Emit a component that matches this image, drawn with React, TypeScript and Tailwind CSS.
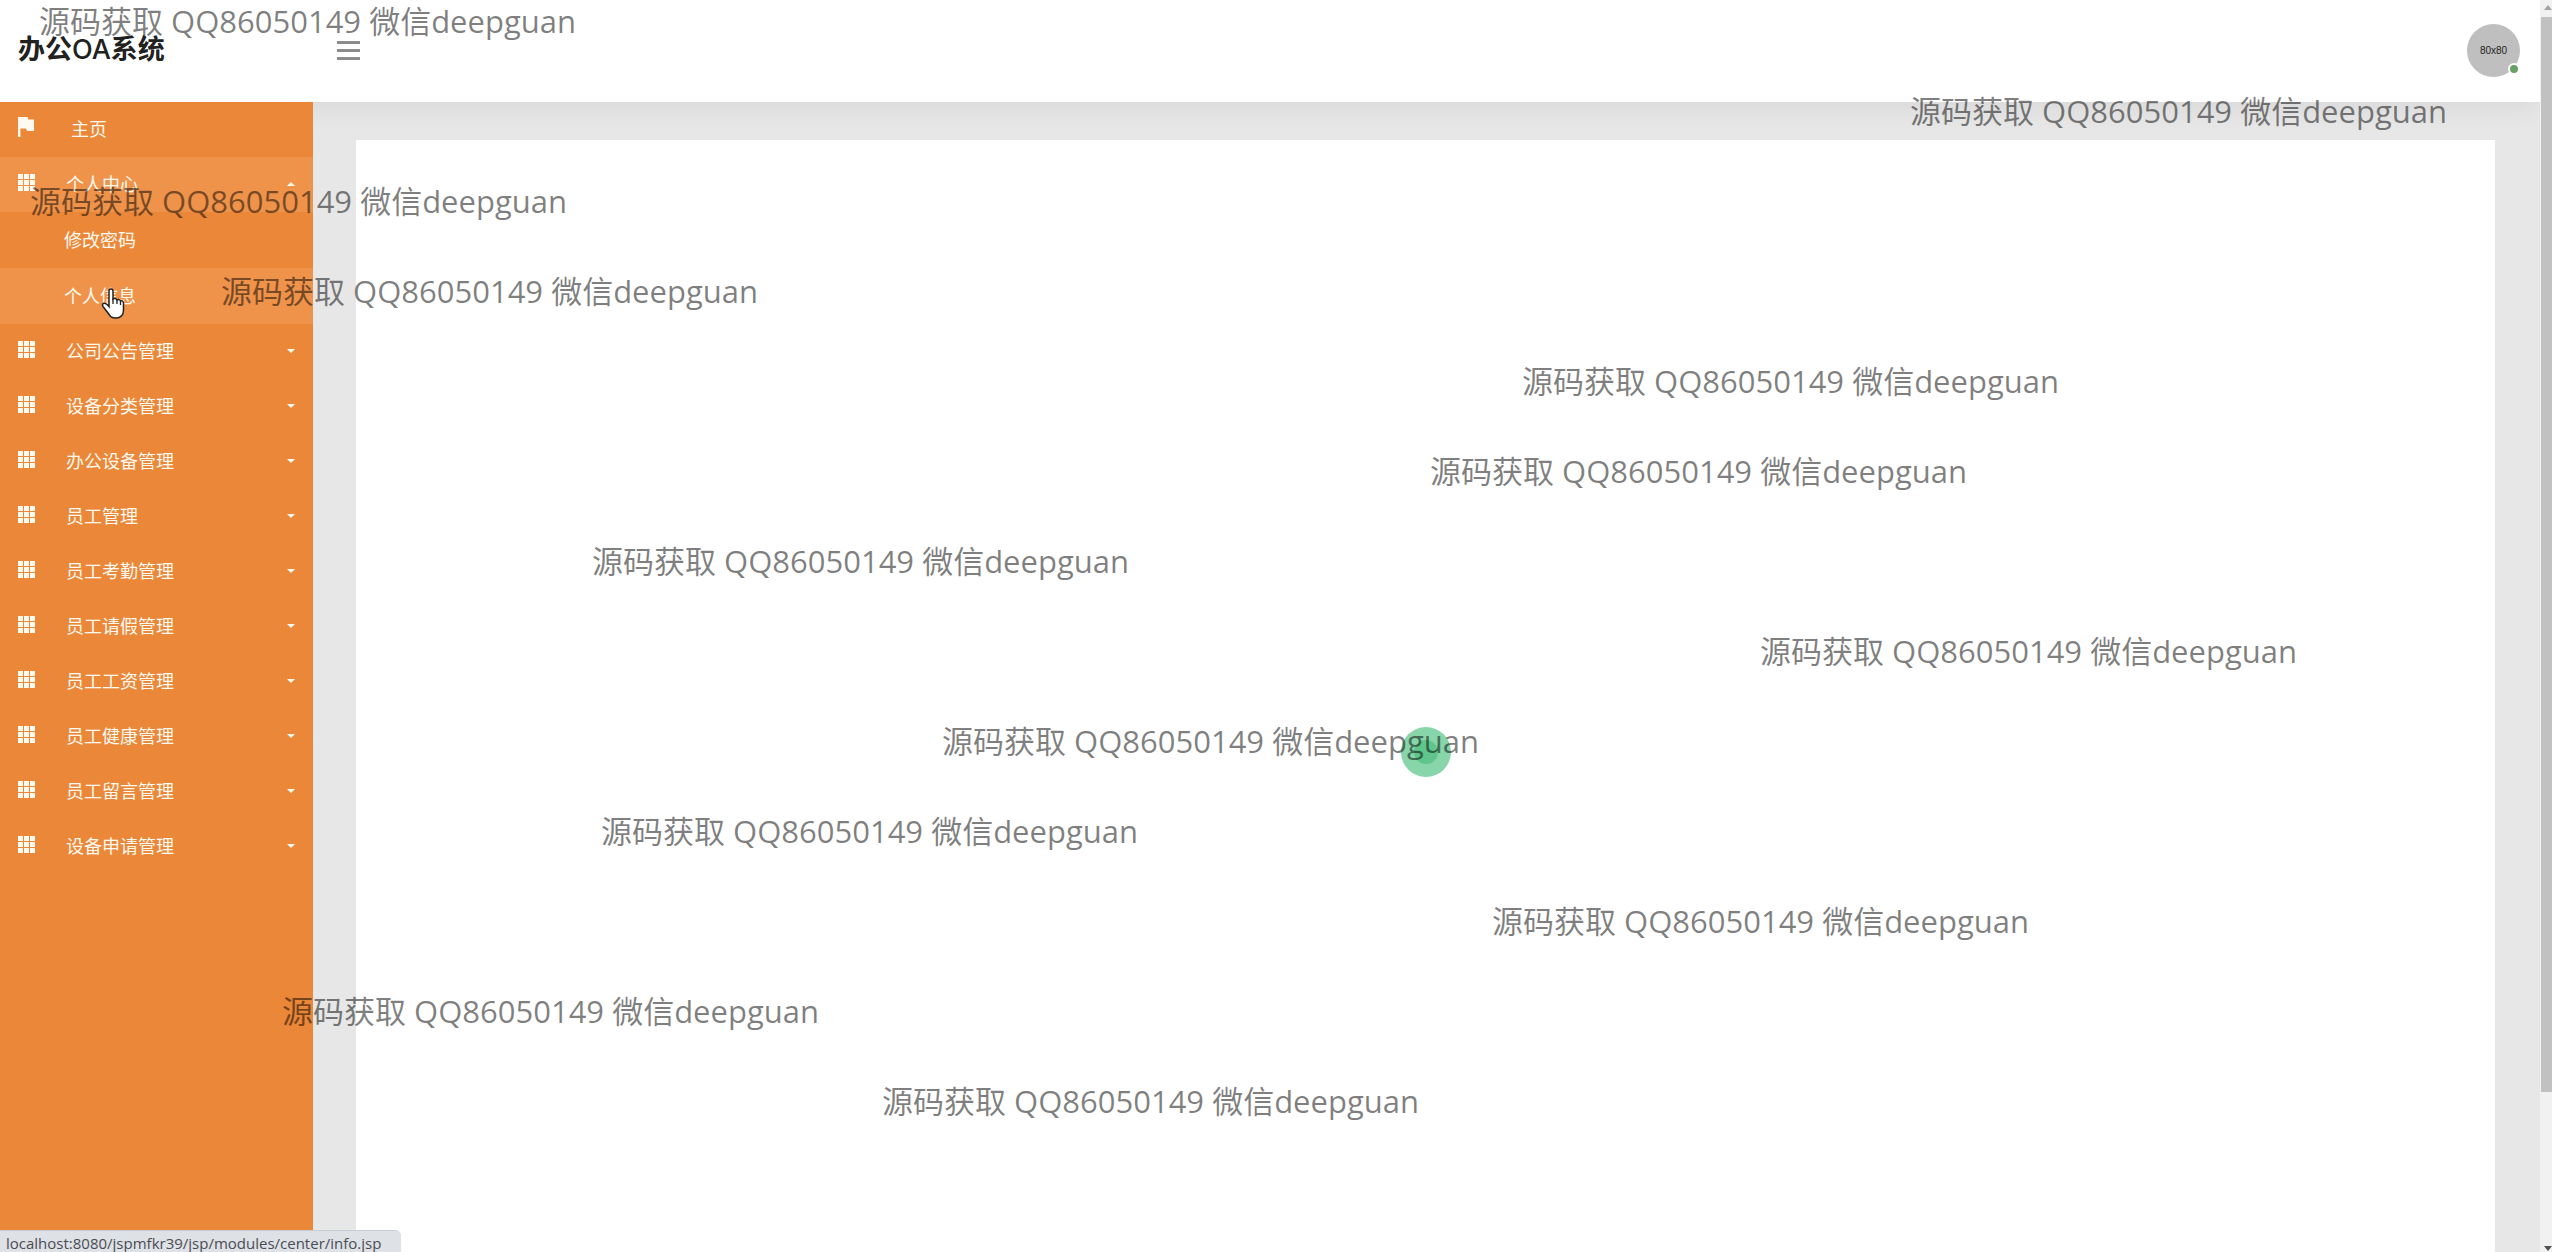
import { useState } from "react";

const MENU = [
  "公司公告管理",
  "设备分类管理",
  "办公设备管理",
  "员工管理",
  "员工考勤管理",
  "员工请假管理",
  "员工工资管理",
  "员工健康管理",
  "员工留言管理",
  "设备申请管理",
];

const WATERMARK_OFFSETS = [39, 1910, 30, 221, 1522, 1430, 592, 1760, 942, 601, 1492, 282, 882];

function GridIcon() {
  return (
    <svg className="size-[17px] shrink-0" viewBox="0 0 17 17" fill="currentColor" aria-hidden="true">
      {[0, 6, 12].map((y) => [0, 6, 12].map((x) => <rect key={`${x}-${y}`} x={x} y={y} width="5" height="5" />))}
    </svg>
  );
}

function Caret({ up = false }: { up?: boolean }) {
  return (
    <svg className="h-1 w-2 shrink-0" viewBox="0 0 8 4" fill="currentColor" aria-hidden="true">
      <path d={up ? "M0 4L4 0L8 4Z" : "M0 0H8L4 4Z"} />
    </svg>
  );
}

function MenuItem({ label, open, onClick }: { label: string; open: boolean; onClick: () => void }) {
  return (
    <button
      type="button"
      aria-expanded={open}
      onClick={onClick}
      className={`flex h-[55px] w-full cursor-pointer items-center pr-[18px] pb-px pl-[18px] text-left ${open ? "bg-[#ef934b]" : ""}`}
    >
      <span className="pb-1">
        <GridIcon />
      </span>
      <span className="ml-[31px] flex-1">{label}</span>
      <Caret up={open} />
    </button>
  );
}

export default function App() {
  const [open, setOpen] = useState<string>("个人中心");
  const toggle = (name: string) => setOpen(open === name ? "" : name);

  return (
    <div className="relative flex h-screen overflow-hidden bg-[#e7e7e7] font-['Open_Sans','Noto_Sans_CJK_SC',sans-serif]">
      <div className="flex min-w-0 flex-1 flex-col">
        <header className="z-10 flex h-[102px] shrink-0 items-start justify-between bg-white pr-[20px] pl-[18px] shadow-[0_8px_24px_rgba(0,0,0,0.06)]">
          <div className="flex items-center pt-[30px]">
            <h1 className="w-[319px] font-['Inter','Noto_Sans_CJK_SC',sans-serif] text-[27px] leading-10 font-bold text-[#212121]">
              办公<span className="font-medium">OA</span>系统
            </h1>
            <button type="button" aria-label="菜单" className="flex w-[23px] flex-col gap-[5px]">
              <span className="h-[3px] bg-[#8c8c8c]" />
              <span className="h-[3px] bg-[#8c8c8c]" />
              <span className="h-[3px] bg-[#8c8c8c]" />
            </button>
          </div>
          <button
            type="button"
            className="relative mt-6 flex size-[53px] items-center justify-center rounded-full bg-[#bfbfbf] font-['Liberation_Sans',sans-serif] text-[10px] text-[#222]"
          >
            80x80
            <span className="absolute right-0 bottom-0.5 size-3 rounded-full border-2 border-white bg-[#66a266]" />
          </button>
        </header>

        <div className="flex min-h-0 flex-1">
          <nav className="z-10 w-[313px] shrink-0 bg-[#eb8738] text-lg text-[#fffaf0]">
            <a href="#home" className="flex h-[55px] items-center pb-px pl-[18px]">
              <svg className="mb-1 h-5 w-4" viewBox="0 0 16 20" fill="currentColor" aria-hidden="true">
                <path d="M0 0H9.5L10.3 2.6H16V14H9L8 11.5H2.4V20H0Z" />
              </svg>
              <span className="ml-[37px]">主页</span>
            </a>
            <MenuItem label="个人中心" open={open === "个人中心"} onClick={() => toggle("个人中心")} />
            {open === "个人中心" && (
              <div>
                <a href="#password" className="flex h-14 items-center pl-16">
                  修改密码
                </a>
                <a href="#info" className="flex h-14 items-center bg-[#ef934b] pl-16">
                  个人信息
                </a>
              </div>
            )}
            {MENU.map((label) => (
              <MenuItem key={label} label={label} open={open === label} onClick={() => toggle(label)} />
            ))}
          </nav>

          <main className="flex flex-1 pt-[38px] pr-[45px] pl-[43px]">
            <section className="z-10 flex flex-1 items-start justify-center bg-white pt-[587px]">
              <div className="flex size-[50px] items-center justify-center rounded-full bg-[#87d5a8]">
                <div className="size-6 rounded-full bg-[#5fc58b]" />
              </div>
            </section>
          </main>
        </div>
      </div>

      <div className="z-10 flex w-3 shrink-0 flex-col items-center bg-[#f1f1f1]" aria-hidden="true">
        <svg className="h-[17px] w-3 shrink-0" viewBox="0 0 12 17" fill="#a3a3a3">
          <path d="M4 10L8 5L12 10Z" />
        </svg>
        <div className="ml-px w-[11px] flex-1 bg-[#c1c1c1]" />
        <div className="h-[143px]" />
        <svg className="h-[17px] w-3 shrink-0" viewBox="0 0 12 17" fill="#505050">
          <path d="M4 11L8 16L12 11Z" />
        </svg>
      </div>

      <div className="pointer-events-none absolute inset-0 z-20 overflow-hidden text-[31px] whitespace-nowrap text-black/50">
        <div className="-mt-6">
          {WATERMARK_OFFSETS.map((left) => (
            <p key={left} className="flex h-[90px] items-center" style={{ marginLeft: left }}>
              源码获取 QQ86050149 微信deepguan
            </p>
          ))}
        </div>
      </div>

      <svg className="pointer-events-none absolute top-[288px] left-[101px] z-30 h-8 w-6" viewBox="0 0 24 32" aria-hidden="true">
        <path
          d="M8 3C8 1.500 9 1 10 1S12 1.500 12 3V11C13 10 15.500 10.200 16 12C17 11.200 19 11.500 19.500 13C21 12.500 22.500 13.500 22.500 15V22C22.500 27 19.500 30 15 30C10 30 9 28 7 25L2 18.500C1 17 1.500 15.500 3 15.300C5 15 6.500 16.500 8 18.500Z"
          fill="#fff"
          stroke="#222"
          strokeWidth="1.500"
        />
        <path d="M12 11V16M16 12V16M19.500 13V17" stroke="#222" strokeWidth="1.300" />
      </svg>

      <div className="absolute bottom-0 left-0 z-30 h-[22px] rounded-tr-md border-t border-[#c9ccd1] bg-[#dee1e6] pr-5 pl-1.5 text-[15px] leading-6 text-[#4a4d52]">
        localhost:8080/jspmfkr39/jsp/modules/center/info.jsp
      </div>
    </div>
  );
}
